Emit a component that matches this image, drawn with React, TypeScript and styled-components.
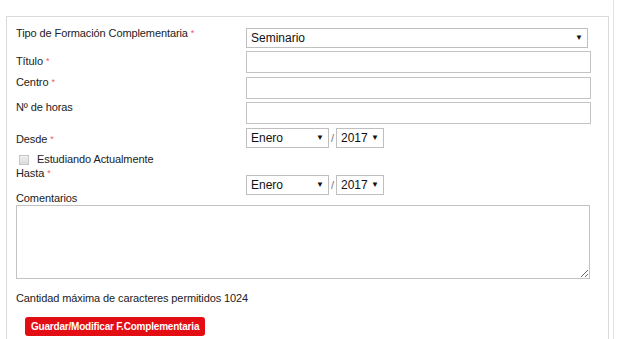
import styled, { createGlobalStyle } from 'styled-components';

const GlobalStyle = createGlobalStyle`
  html, body {
    margin: 0;
    padding: 0;
    background: #ffffff;
  }
  body {
    font-family: 'Liberation Sans', Arial, sans-serif;
    color: #222222;
  }
`;

const months = ['Enero', 'Febrero', 'Marzo', 'Abril', 'Mayo', 'Junio', 'Julio', 'Agosto', 'Septiembre', 'Octubre', 'Noviembre', 'Diciembre'];
const years = ['2017', '2016', '2015', '2014', '2013'];

function DateSelect({ month, year }: { month: string; year: string }) {
  return (
    <StyledDateWrapper>
      <StyledSelectBox $width={83}>
        <StyledSelect defaultValue={month}>
          {months.map((m) => (
            <option key={m}>{m}</option>
          ))}
        </StyledSelect>
        <StyledArrow>▼</StyledArrow>
      </StyledSelectBox>
      <StyledSlash>/</StyledSlash>
      <StyledSelectBox $width={48}>
        <StyledSelect defaultValue={year}>
          {years.map((y) => (
            <option key={y}>{y}</option>
          ))}
        </StyledSelect>
        <StyledArrow>▼</StyledArrow>
      </StyledSelectBox>
    </StyledDateWrapper>
  );
}

function App() {
  return (
    <>
      <GlobalStyle />
      <StyledPage>
        <StyledPanel>
          <StyledRow>
            <StyledLabel $top={1}>
              Tipo de Formación Complementaria <StyledRequired>*</StyledRequired>
            </StyledLabel>
            <StyledSelectBox $width={342} $top={2}>
              <StyledSelect defaultValue="Seminario">
                <option>Seminario</option>
                <option>Curso</option>
                <option>Taller</option>
              </StyledSelect>
              <StyledArrow>▼</StyledArrow>
            </StyledSelectBox>
          </StyledRow>

          <StyledRow>
            <StyledLabel $top={7}>
              Título <StyledRequired>*</StyledRequired>
            </StyledLabel>
            <StyledInput type="text" $top={3} />
          </StyledRow>

          <StyledRow>
            <StyledLabel $top={3}>
              Centro <StyledRequired>*</StyledRequired>
            </StyledLabel>
            <StyledInput type="text" $top={4} />
          </StyledRow>

          <StyledRow>
            <StyledLabel $top={2}>Nº de horas</StyledLabel>
            <StyledInput type="text" $top={3} />
          </StyledRow>

          <StyledRow>
            <StyledLabel $top={9}>
              Desde <StyledRequired>*</StyledRequired>
            </StyledLabel>
            <StyledControl $top={4}>
              <DateSelect month="Enero" year="2017" />
            </StyledControl>
          </StyledRow>

          <StyledCheckRow>
            <StyledCheckbox type="checkbox" />
            Estudiando Actualmente
          </StyledCheckRow>

          <StyledRow $height={25}>
            <StyledLabel $top={0}>
              Hasta <StyledRequired>*</StyledRequired>
            </StyledLabel>
            <StyledControl $top={8}>
              <DateSelect month="Enero" year="2017" />
            </StyledControl>
          </StyledRow>

          <StyledLabel $top={0}>Comentarios</StyledLabel>
          <StyledTextarea />

          <StyledNote>Cantidad máxima de caracteres permitidos 1024</StyledNote>

          <StyledButton type="button">Guardar/Modificar F.Complementaria</StyledButton>
        </StyledPanel>
      </StyledPage>
    </>
  );
}

export default App;

const StyledPage = styled.div`
  box-sizing: border-box;
  width: 614px;
  min-height: 339px;
  padding: 16px 0 0 6px;
  border-right: 1px solid #e3e3e3;
  overflow: hidden;
`;

const StyledPanel = styled.div`
  box-sizing: border-box;
  width: 603px;
  min-height: 330px;
  padding: 9px 16px 0 9px;
  border: 1px solid #dadada;
  border-bottom: none;
  display: flex;
  flex-direction: column;
  align-items: flex-start;
`;

const StyledRow = styled.div<{ $height?: number }>`
  display: grid;
  grid-template-columns: 230px 345px;
  align-items: start;
  ${({ $height }) => ($height ? `height: ${$height}px;` : '')}
`;

const StyledLabel = styled.div<{ $top: number }>`
  padding-top: ${({ $top }) => $top}px;
  font-size: 11px;
  line-height: 13px;
  letter-spacing: -0.1px;
  color: #222222;
`;

const StyledRequired = styled.span`
  color: #f05a5a;
  font-size: 9px;
  vertical-align: top;
`;

const StyledControl = styled.div<{ $top: number }>`
  margin-top: ${({ $top }) => $top}px;
`;

const StyledInput = styled.input<{ $top: number }>`
  box-sizing: border-box;
  width: 345px;
  height: 22px;
  margin: ${({ $top }) => $top}px 0 0 0;
  padding: 2px 4px;
  border: 1px solid #c3c3c3;
  border-radius: 0;
  font-family: 'Liberation Sans', Arial, sans-serif;
  font-size: 12px;
  outline: none;
`;

const StyledSelectBox = styled.div<{ $width: number; $top?: number }>`
  position: relative;
  box-sizing: border-box;
  width: ${({ $width }) => $width}px;
  height: 20px;
  margin-top: ${({ $top }) => $top ?? 0}px;
`;

const StyledSelect = styled.select`
  box-sizing: border-box;
  width: 100%;
  height: 100%;
  margin: 0;
  padding: 0 14px 0 4px;
  border: 1px solid #bfbfbf;
  border-radius: 0;
  background: #ffffff;
  appearance: none;
  font-family: 'Liberation Sans', Arial, sans-serif;
  font-size: 12px;
  color: #111111;
  outline: none;
`;

const StyledArrow = styled.span`
  position: absolute;
  right: 5px;
  top: 5px;
  font-size: 8px;
  line-height: 10px;
  color: #111111;
  pointer-events: none;
`;

const StyledDateWrapper = styled.div`
  display: flex;
  align-items: center;
  gap: 2px;
`;

const StyledSlash = styled.span`
  width: 3px;
  font-size: 11px;
  color: #777777;
  text-align: center;
`;

const StyledCheckRow = styled.label`
  display: flex;
  align-items: center;
  gap: 8px;
  height: 19px;
  padding: 4px 0 0 3px;
  box-sizing: border-box;
  font-size: 11px;
  line-height: 13px;
  letter-spacing: -0.1px;
  color: #222222;
`;

const StyledCheckbox = styled.input`
  appearance: none;
  box-sizing: border-box;
  width: 10px;
  height: 10px;
  margin: 0;
  border: 1px solid #c6c6c6;
  background: linear-gradient(#eeeeee, #dcdcdc);
`;

const StyledTextarea = styled.textarea`
  box-sizing: border-box;
  width: 574px;
  height: 74px;
  margin: 0;
  padding: 3px;
  border: 1px solid #c3c3c3;
  border-radius: 0;
  font-family: 'Liberation Sans', Arial, sans-serif;
  font-size: 12px;
  outline: none;
`;

const StyledNote = styled.div`
  margin-top: 13px;
  font-size: 11px;
  line-height: 13px;
  letter-spacing: -0.1px;
  color: #222222;
`;

const StyledButton = styled.button`
  box-sizing: border-box;
  height: 19px;
  margin: 12px 0 0 9px;
  padding: 0 6px;
  border: none;
  border-radius: 3px;
  background: #e30d14;
  color: #ffffff;
  font-family: 'Liberation Sans', Arial, sans-serif;
  font-size: 10px;
  font-weight: bold;
  letter-spacing: -0.2px;
  cursor: pointer;
`;
